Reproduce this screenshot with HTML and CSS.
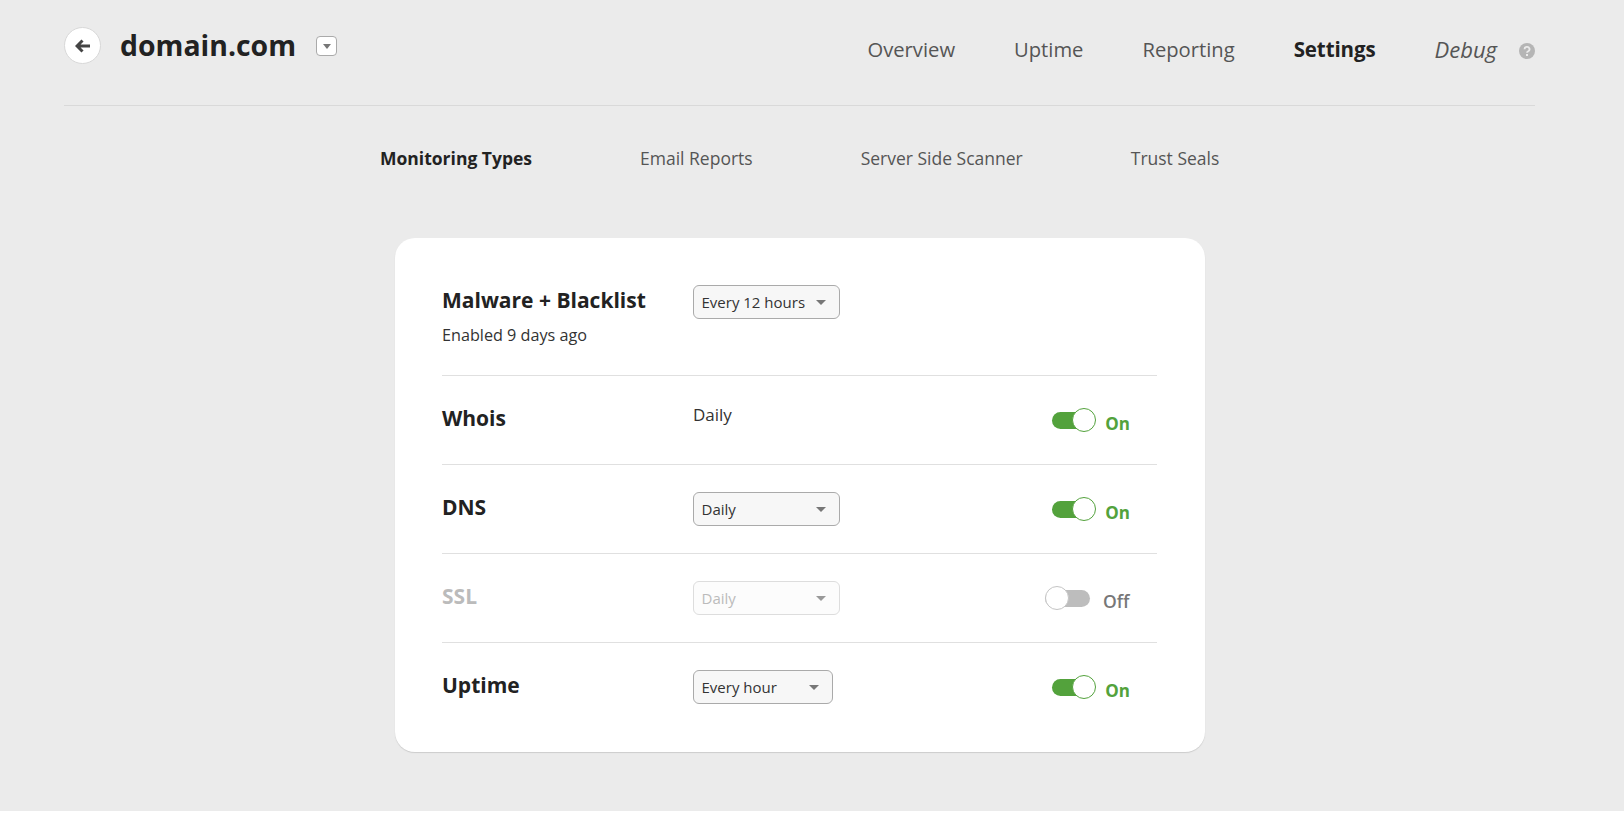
FILE: index.html
```html
<!DOCTYPE html>
<html lang="en">
<head>
<meta charset="utf-8">
<title>domain.com settings</title>
<link rel="stylesheet" href="styles.css">
</head>
<body>
<div class="page">
  <header class="topbar">
    <div class="site">
      <span class="back"><svg width="16" height="14" viewBox="0 0 16 14"><path d="M7.500 1.500 2 7l5.500 5.500M2.500 7H15" fill="none" stroke="#444" stroke-width="3"/></svg></span>
      <h1 class="domain">domain.com</h1>
      <span class="mini"><svg width="8" height="5" viewBox="0 0 8 5"><path d="M0 0h8L4 5z" fill="#777"/></svg></span>
    </div>
    <nav class="nav">
      <a class="nav-item">Overview</a>
      <a class="nav-item">Uptime</a>
      <a class="nav-item">Reporting</a>
      <a class="nav-item active">Settings</a>
      <a class="nav-item debug">Debug</a>
      <svg class="help" width="16" height="16" viewBox="0 0 16 16"><circle cx="8" cy="8" r="8" fill="#b5b5b5"/><path d="M5.500 6.200a2.500 2.300 0 1 1 3.700 2c-.9.500-1.200.9-1.200 1.600" fill="none" stroke="#ebebeb" stroke-width="1.800"/><rect x="7" y="11" width="2" height="2" fill="#ebebeb"/></svg>
    </nav>
  </header>
  <nav class="tabs">
    <a class="tab active">Monitoring Types</a>
    <a class="tab">Email Reports</a>
    <a class="tab">Server Side Scanner</a>
    <a class="tab">Trust Seals</a>
  </nav>
  <main class="card">
    <section class="row first">
      <div class="name">
        <h2 class="title">Malware + Blacklist</h2>
        <p class="sub">Enabled 9 days ago</p>
      </div>
      <div class="freq"><span class="select"><span>Every 12 hours</span><i class="caret"></i></span></div>
    </section>
    <section class="row">
      <div class="name"><h2 class="title">Whois</h2></div>
      <div class="freq plain">Daily</div>
      <div class="state on"><span class="switch"><span class="knob"></span></span><span class="label">On</span></div>
    </section>
    <section class="row">
      <div class="name"><h2 class="title">DNS</h2></div>
      <div class="freq"><span class="select"><span>Daily</span><i class="caret"></i></span></div>
      <div class="state on"><span class="switch"><span class="knob"></span></span><span class="label">On</span></div>
    </section>
    <section class="row disabled">
      <div class="name"><h2 class="title">SSL</h2></div>
      <div class="freq"><span class="select"><span>Daily</span><i class="caret"></i></span></div>
      <div class="state off"><span class="switch"><span class="knob"></span></span><span class="label">Off</span></div>
    </section>
    <section class="row last">
      <div class="name"><h2 class="title">Uptime</h2></div>
      <div class="freq"><span class="select short"><span>Every hour</span><i class="caret"></i></span></div>
      <div class="state on"><span class="switch"><span class="knob"></span></span><span class="label">On</span></div>
    </section>
  </main>
</div>
</body>
</html>
```
FILE: styles.css
```css
* { box-sizing: border-box; }
html, body { margin: 0; background: #fff; }
body { font-family: "Open Sans", "Liberation Sans", sans-serif; color: #222; overflow: hidden; }
.page { height: 811px; background: #ebebeb; padding: 0 89px 0 64px; }
.topbar { height: 106px; border-bottom: 1px solid #d9d9d9; display: flex; justify-content: space-between; padding-top: 27px; align-items: flex-start; }
.site { display: flex; align-items: center; }
.back { width: 37px; height: 37px; border-radius: 50%; background: #fff; border: 1px solid #d8d8d8; display: flex; align-items: center; justify-content: center; }
.domain { margin: 0 0 0 19px; font-size: 28.400px; line-height: 37px; font-weight: 700; color: #222; }
.mini { width: 21px; height: 20px; margin: 1px 0 0 20px; background: #fff; border: 1px solid #aaa; border-radius: 4px; display: flex; align-items: center; justify-content: center; }
.nav { display: flex; align-items: center; height: 44px; font-size: 20.200px; color: #555; }
.nav-item { margin-right: 59px; }
.nav-item.active { font-weight: 700; color: #222; font-size: 20.500px; letter-spacing: -.1px; }
.nav-item.debug { font-style: italic; font-size: 22px; margin-right: 22px; }
.help { flex: none; margin-top: 4px; }
.tabs { display: flex; gap: 108px; padding: 39px 0 0 316px; font-size: 17.500px; line-height: 26px; color: #555; height: 132px; }
.tab.active { font-weight: 700; color: #222; }
.card { margin-left: 331px; width: 810px; height: 514px; background: #fff; border-radius: 20px; padding: 0 48px 0 47px; box-shadow: 0 1px 1px #ccc; }
.row { display: flex; height: 89px; padding-top: 27px; border-bottom: 1px solid #e0e0e0; position: relative; }
.row.first { height: 138px; padding-top: 47px; }
.row.last { border-bottom: 0; }
.name { width: 251px; flex: none; }
.title { margin: 0; font-size: 21px; line-height: 30px; font-weight: 700; color: #222; }
.sub { margin: 8px 0 0; font-size: 16.200px; line-height: 24px; color: #333; }
.freq { flex: 1; margin-top: 0; font-size: 15px; }
.first .freq { margin-top: 0; }
.freq.plain { font-size: 17px; line-height: 24px; margin-top: 0; color: #333; }
.select { display: flex; width: 147px; height: 34px; padding: 0 13px 0 7.500px; align-items: center; justify-content: space-between; background: #f7f7f7; border: 1px solid #aaa; border-radius: 6px; color: #333; }
.select.short { width: 140px; }
.caret { width: 0; height: 0; border: 5px solid transparent; border-top: 5px solid #777; border-bottom: 0; }
.state { width: 78px; flex: none; display: flex; align-items: center; height: 30px; margin: 1px 27px 0 0; position: relative; }
.switch { width: 48px; height: 17px; border-radius: 9px; position: relative; margin-top: 3px; }
.knob { position: absolute; top: -4px; width: 24px; height: 24px; border-radius: 50%; background: #fff; }
.on .switch { background: #53a23c; margin-left: 0; }
.on .knob { right: -1px; border: 1px solid #53a23c; }
.on .label { color: #53a23c; margin-left: 10px; margin-top: 8px; }
.label { font-size: 17px; font-weight: 700; }
.off .switch { width: 45px; background: #bdbdbd; margin-left: -7px; }
.off .knob { left: 0; border: 1px solid #c4c4c4; }
.off .label { color: #777; font-weight: 600; font-size: 17.500px; margin-left: 13px; margin-top: 8px; }
.disabled .title { color: #bbb; }
.disabled .select { background: #fcfcfc; border-color: #ddd; color: #bbb; }
.disabled .caret { border-top-color: #999; }
```
